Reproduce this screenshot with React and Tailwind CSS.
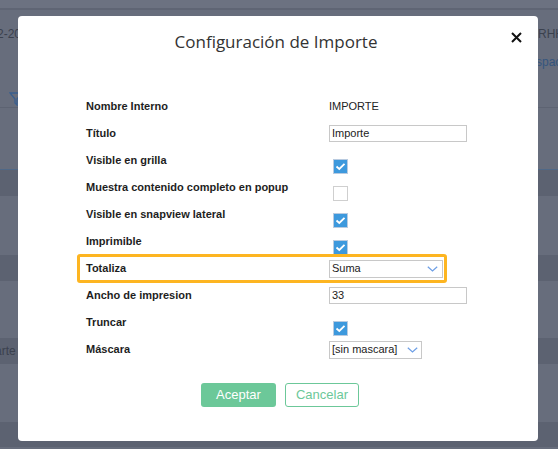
import React from "react";

const Check = ({ checked }) => (
  <div
    className={`mt-[12px] ml-[4px] w-[15px] h-[15px] border flex items-center justify-center ${
      checked ? "bg-[#3d99dd] border-[#b9cbe0]" : "bg-white border-[#cfcfcf]"
    }`}
  >
    {checked && (
      <svg width="11" height="9" viewBox="0 0 11 9">
        <path d="M1.5 4.5 L4.3 7 L9.5 1.8" fill="none" stroke="#fff" strokeWidth="1.8" />
      </svg>
    )}
  </div>
);

const Chevron = () => (
  <svg width="11" height="6" viewBox="0 0 11 6">
    <path d="M0.8 0.8 L5.5 5 L10.2 0.8" fill="none" stroke="#6d9fe6" strokeWidth="1.2" />
  </svg>
);

const Row = ({ label, children }) => (
  <div className="flex items-center h-[27px]">
    <div className="w-[243px] font-bold text-[11px] text-[#1e1e1e]">{label}</div>
    {children}
  </div>
);

export default function App() {
  return (
    <div className="relative w-[558px] h-[449px] overflow-hidden bg-[#676d7c] font-['Liberation_Sans',Arial,sans-serif]">
      {/* page behind the overlay */}
      <div className="flex flex-col">
        <div className="h-[10px] bg-[#6c7281] border-b-2 border-[#5f6574]" />
        <div className="h-[97px] relative text-[12px] text-[#3b414e]">
          <span className="absolute -left-[3px] top-[15px]">2-20</span>
          <span className="absolute left-[538px] top-[15px]">RHH</span>
          <span className="absolute left-[536px] top-[43px] text-[#35557e]">spac</span>
          <svg className="absolute left-[9px] top-[82px]" width="14" height="14" viewBox="0 0 14 14">
            <path d="M1 1 H13 L8 7 V13 L6 11 V7 Z" fill="none" stroke="#3a5f8e" strokeWidth="1.3" />
          </svg>
        </div>
        <div className="h-[62px] border-t border-[#5d6372]" />
        <div className="h-[27px] bg-[#5c6271] border-t border-[#4f6887]" />
        <div className="h-[59px]" />
        <div className="h-[26px] bg-[#5c6271]" />
        <div className="h-[57px]" />
        <div className="h-[26px] bg-[#5c6271] text-[12px] text-[#3b414e] flex items-center">
          <span className="-ml-[5px]">arte</span>
        </div>
        <div className="h-[58px]" />
        <div className="h-[25px] bg-[#5c6271]" />
      </div>

      {/* modal */}
      <div className="absolute left-[18px] top-[16px] w-[520px] h-[425px] bg-white rounded-[4px] flex flex-col">
        <div className="relative h-[77px]">
          <div className="pt-[14px] pr-[4px] text-center text-[17px] leading-[24px] text-[#333] font-['Open_Sans',sans-serif]">
            Configuración de Importe
          </div>
          <svg className="absolute left-[493px] top-[16px]" width="11" height="11" viewBox="0 0 11 11">
            <path d="M1 1 L10 10 M10 1 L1 10" stroke="#111" strokeWidth="2" />
          </svg>
        </div>

        <div className="pl-[68px] flex flex-col">
          <Row label="Nombre Interno">
            <span className="text-[11px] text-[#222]">IMPORTE</span>
          </Row>
          <Row label="Título">
            <div className="w-[138px] h-[17px] border border-[#c8c8c8] text-[11px] text-[#222] pl-[2px] leading-[15px]">
              Importe
            </div>
          </Row>
          <Row label="Visible en grilla">
            <Check checked />
          </Row>
          <Row label="Muestra contenido completo en popup">
            <Check />
          </Row>
          <Row label="Visible en snapview lateral">
            <Check checked />
          </Row>
          <Row label="Imprimible">
            <Check checked />
          </Row>
          <div className="relative z-10 flex items-center h-[29px] -ml-[9px] w-[370px] pl-[6px] border-[3px] border-[#fdb521] rounded-[3px] bg-white -mt-px -mb-px">
            <div className="w-[243px] font-bold text-[11px] text-[#1e1e1e]">Totaliza</div>
            <div className="w-[114px] h-[18px] border border-[#c8c8c8] flex items-center justify-between pl-[2px] pr-[4px] text-[11px] text-[#222]">
              <span>Suma</span>
              <Chevron />
            </div>
          </div>
          <Row label="Ancho de impresion">
            <div className="w-[138px] h-[17px] border border-[#c8c8c8] text-[11px] text-[#222] pl-[2px] leading-[15px]">
              33
            </div>
          </Row>
          <Row label="Truncar">
            <Check checked />
          </Row>
          <Row label="Máscara">
            <div className="w-[93px] h-[18px] border border-[#c8c8c8] flex items-center justify-between pl-[2px] pr-[3px] text-[11px] text-[#222]">
              <span>[sin mascara]</span>
              <Chevron />
            </div>
          </Row>
        </div>

        <div className="mt-[20px] flex justify-center gap-[9px] pl-[4px]">
          <button className="w-[75px] h-[24px] rounded-[3px] bg-[#6cc899] text-white text-[13px]">Aceptar</button>
          <button className="w-[74px] h-[24px] rounded-[3px] border border-[#6cc899] text-[#6cc899] text-[13px]">
            Cancelar
          </button>
        </div>
      </div>
    </div>
  );
}
